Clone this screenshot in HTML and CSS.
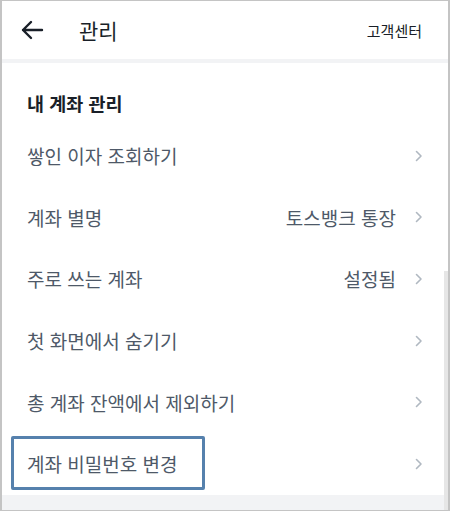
FILE: index.html
```html
<!DOCTYPE html>
<html lang="ko">
<head>
<meta charset="utf-8">
<link rel="stylesheet" href="styles.css">
</head>
<body>
<div class="frame">
  <header class="topbar">
    <div class="left">
      <svg class="back" width="24" height="20" viewBox="0 0 24 20"><path d="M22 10H3M11 2L3 10l8 8" fill="none" stroke="#191f28" stroke-width="2.4" stroke-linecap="round" stroke-linejoin="round"/></svg>
      <span class="title">관리</span>
    </div>
    <span class="help">고객센터</span>
  </header>
  <div class="sep"></div>
  <section class="list">
    <h2 class="section-title">내 계좌 관리</h2>
    <div class="row"><span class="label">쌓인 이자 조회하기</span><span class="right"><svg class="chev" width="8" height="12" viewBox="0 0 8 12"><path d="M1.5 1.5L6 6l-4.5 4.5" fill="none" stroke="#b0b8c1" stroke-width="1.6" stroke-linecap="round" stroke-linejoin="round"/></svg></span></div>
    <div class="row"><span class="label">계좌 별명</span><span class="right"><span class="value">토스뱅크 통장</span><svg class="chev" width="8" height="12" viewBox="0 0 8 12"><path d="M1.5 1.5L6 6l-4.5 4.5" fill="none" stroke="#b0b8c1" stroke-width="1.6" stroke-linecap="round" stroke-linejoin="round"/></svg></span></div>
    <div class="row"><span class="label">주로 쓰는 계좌</span><span class="right"><span class="value">설정됨</span><svg class="chev" width="8" height="12" viewBox="0 0 8 12"><path d="M1.5 1.5L6 6l-4.5 4.5" fill="none" stroke="#b0b8c1" stroke-width="1.6" stroke-linecap="round" stroke-linejoin="round"/></svg></span></div>
    <div class="row"><span class="label">첫 화면에서 숨기기</span><span class="right"><svg class="chev" width="8" height="12" viewBox="0 0 8 12"><path d="M1.5 1.5L6 6l-4.5 4.5" fill="none" stroke="#b0b8c1" stroke-width="1.6" stroke-linecap="round" stroke-linejoin="round"/></svg></span></div>
    <div class="row"><span class="label">총 계좌 잔액에서 제외하기</span><span class="right"><svg class="chev" width="8" height="12" viewBox="0 0 8 12"><path d="M1.5 1.5L6 6l-4.5 4.5" fill="none" stroke="#b0b8c1" stroke-width="1.6" stroke-linecap="round" stroke-linejoin="round"/></svg></span></div>
    <div class="row highlighted"><span class="label">계좌 비밀번호 변경</span><span class="right"><svg class="chev" width="8" height="12" viewBox="0 0 8 12"><path d="M1.5 1.5L6 6l-4.5 4.5" fill="none" stroke="#b0b8c1" stroke-width="1.6" stroke-linecap="round" stroke-linejoin="round"/></svg></span><span class="mark"></span></div>
  </section>
  <div class="bottom-band"></div>
  <div class="scrollbar"></div>
</div>
</body>
</html>
```

FILE: styles.css
```css
* { box-sizing: border-box; }
html, body { margin: 0; padding: 0; background: #fff; }
body {
  font-family: "Noto Sans CJK KR", "Noto Sans", sans-serif;
  font-feature-settings: "palt" 1;
}
.frame {
  position: relative;
  width: 450px;
  height: 511px;
  border: 1px solid #c4c4c4;
  border-left-width: 2px;
  border-right-width: 2px;
  overflow: hidden;
  display: flex;
  flex-direction: column;
}
.topbar {
  height: 58px;
  display: flex;
  align-items: center;
  justify-content: space-between;
  padding: 0 26px 0 18px;
  flex-shrink: 0;
}
.left { display: flex; align-items: center; }
.back { display: block; margin-right: 35px; }
.title { font-size: 21px; color: #191f28; line-height: 1; }
.help { font-size: 15px; color: #191f28; line-height: 1; }
.sep { height: 4px; background: #f2f3f5; flex-shrink: 0; }
.list { flex: 1; display: flex; flex-direction: column; }
.section-title {
  margin: 0;
  height: 62px;
  display: flex;
  align-items: center;
  padding: 18px 0 0 25px;
  font-size: 18.5px;
  font-weight: 700;
  color: #191f28;
}
.row {
  position: relative;
  height: 61.6px;
  display: flex;
  align-items: center;
  justify-content: space-between;
  padding: 0 25px 0 25px;
}
.label { font-size: 19px; color: #4e5968; }
.right { display: flex; align-items: center; }
.value { font-size: 19px; color: #4e5968; margin-right: 19px; }
.chev { display: block; }
.mark {
  position: absolute;
  left: 9px;
  top: 3px;
  width: 194px;
  height: 54px;
  border: 3px solid #5681ad;
  border-radius: 2px;
}
.bottom-band { height: 15px; background: #f2f3f5; flex-shrink: 0; }
.scrollbar {
  position: absolute;
  right: 0;
  top: 270px;
  width: 4px;
  bottom: 0;
  background: #e6e6e6;
}
```
